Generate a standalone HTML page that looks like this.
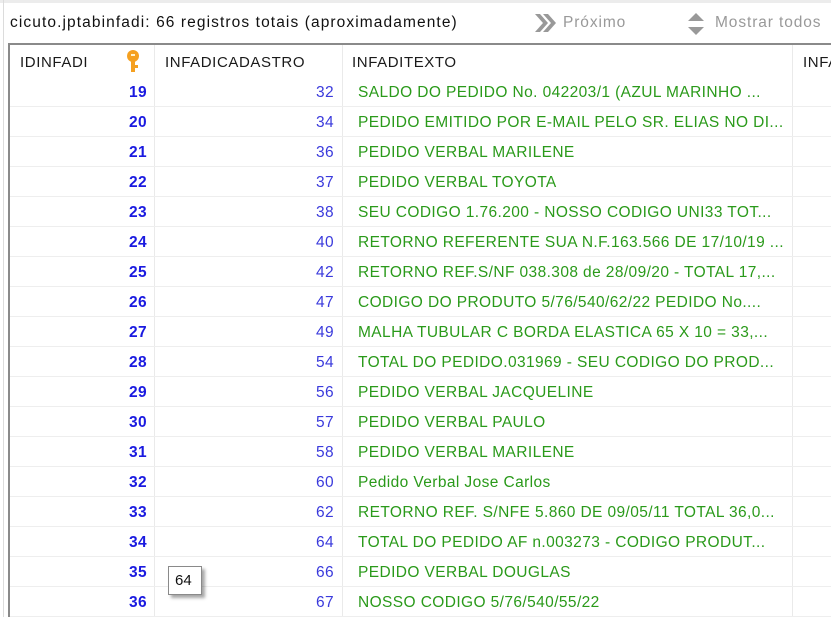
<html><head><style>
body{margin:0;width:831px;height:617px;overflow:hidden;background:#fff;font-family:"Liberation Sans",sans-serif;position:relative;letter-spacing:0.9px}
.abs{position:absolute;white-space:nowrap}
.hdr{font-size:15px;color:#1a1a1a;top:54px;letter-spacing:0.6px}
.row{position:absolute;left:10px;width:821px;height:30px;border-bottom:1px solid #eeeeee;font-size:15.5px;letter-spacing:0.4px}
.row span{position:absolute;top:8px}
.a{right:684px;color:#1a1ae0;font-weight:bold}
.b{right:497px;color:#3a3adc}
.c{left:348px;color:#2a9a1a}
</style></head><body>
<div class="abs" style="left:0;top:0;width:831px;height:3px;background:#ececec"></div>
<div class="abs" style="left:3px;top:0;width:1px;height:617px;background:#dcdcdc"></div>
<div class="abs" style="left:10px;top:14px;font-size:15.5px;color:#111;letter-spacing:1.1px">cicuto.jptabinfadi: 66 registros totais (aproximadamente)</div>
<svg class="abs" style="left:533px;top:12px" width="24" height="22"><path d="M2 2L10 11L2 20H7L15 11L7 2Z M10 2L18 11L10 20H15L23 11L15 2Z" fill="#999"/></svg>
<div class="abs" style="left:563px;top:14px;font-size:15.5px;color:#999">Próximo</div>
<svg class="abs" style="left:687px;top:12px" width="18" height="24"><path d="M9 1L17 9H1Z M9 23L17 15H1Z" fill="#999"/></svg>
<div class="abs" style="left:715px;top:14px;font-size:15.5px;color:#999">Mostrar todos</div>
<div class="abs" style="left:8px;top:43px;width:823px;height:2px;background:#8a8a8a"></div>
<div class="abs" style="left:8px;top:43px;width:2px;height:574px;background:#8a8a8a"></div>
<div class="abs" style="left:154px;top:45px;width:1px;height:572px;background:#eaeaea"></div>
<div class="abs" style="left:342px;top:45px;width:1px;height:572px;background:#eaeaea"></div>
<div class="abs" style="left:792px;top:45px;width:1px;height:572px;background:#eaeaea"></div>
<div class="abs hdr" style="left:20px">IDINFADI</div>
<svg class="abs" style="left:124px;top:50px" width="20" height="24"><circle cx="9" cy="6" r="6" fill="#f5a020"/><rect x="7" y="9" width="4" height="13" fill="#f5a020"/><rect x="10" y="15" width="4" height="3" fill="#f5a020"/><rect x="7" y="4" width="4" height="2" fill="#fff3d0"/></svg>
<div class="abs hdr" style="left:165px">INFADICADASTRO</div>
<div class="abs hdr" style="left:352px">INFADITEXTO</div>
<div class="abs hdr" style="left:803px">INFA</div>

<div class="row" style="top:76px"><span class="a">19</span><span class="b">32</span><span class="c">SALDO DO PEDIDO No. 042203/1 (AZUL MARINHO ...</span></div>
<div class="row" style="top:106px"><span class="a">20</span><span class="b">34</span><span class="c">PEDIDO EMITIDO POR E-MAIL PELO SR. ELIAS NO DI...</span></div>
<div class="row" style="top:136px"><span class="a">21</span><span class="b">36</span><span class="c">PEDIDO VERBAL MARILENE</span></div>
<div class="row" style="top:166px"><span class="a">22</span><span class="b">37</span><span class="c">PEDIDO VERBAL TOYOTA</span></div>
<div class="row" style="top:196px"><span class="a">23</span><span class="b">38</span><span class="c">SEU CODIGO 1.76.200 - NOSSO CODIGO UNI33 TOT...</span></div>
<div class="row" style="top:226px"><span class="a">24</span><span class="b">40</span><span class="c">RETORNO REFERENTE SUA N.F.163.566 DE 17/10/19 ...</span></div>
<div class="row" style="top:256px"><span class="a">25</span><span class="b">42</span><span class="c">RETORNO REF.S/NF 038.308 de 28/09/20 - TOTAL 17,...</span></div>
<div class="row" style="top:286px"><span class="a">26</span><span class="b">47</span><span class="c">CODIGO DO PRODUTO 5/76/540/62/22 PEDIDO No....</span></div>
<div class="row" style="top:316px"><span class="a">27</span><span class="b">49</span><span class="c">MALHA TUBULAR C BORDA ELASTICA 65 X 10 = 33,...</span></div>
<div class="row" style="top:346px"><span class="a">28</span><span class="b">54</span><span class="c">TOTAL DO PEDIDO.031969 - SEU CODIGO DO PROD...</span></div>
<div class="row" style="top:376px"><span class="a">29</span><span class="b">56</span><span class="c">PEDIDO VERBAL JACQUELINE</span></div>
<div class="row" style="top:406px"><span class="a">30</span><span class="b">57</span><span class="c">PEDIDO VERBAL PAULO</span></div>
<div class="row" style="top:436px"><span class="a">31</span><span class="b">58</span><span class="c">PEDIDO VERBAL MARILENE</span></div>
<div class="row" style="top:466px"><span class="a">32</span><span class="b">60</span><span class="c">Pedido Verbal Jose Carlos</span></div>
<div class="row" style="top:496px"><span class="a">33</span><span class="b">62</span><span class="c">RETORNO REF. S/NFE 5.860 DE 09/05/11 TOTAL 36,0...</span></div>
<div class="row" style="top:526px"><span class="a">34</span><span class="b">64</span><span class="c">TOTAL DO PEDIDO AF n.003273 - CODIGO PRODUT...</span></div>
<div class="row" style="top:556px"><span class="a">35</span><span class="b">66</span><span class="c">PEDIDO VERBAL DOUGLAS</span></div>
<div class="row" style="top:586px"><span class="a">36</span><span class="b">67</span><span class="c">NOSSO CODIGO 5/76/540/55/22</span></div>
<div class="abs" style="left:168px;top:566px;width:34px;height:29px;background:#fff;border:1px solid #8a8a8a;box-shadow:3px 3px 3px rgba(0,0,0,.35);font-size:15px;color:#111;line-height:27px;padding-left:6px;box-sizing:border-box;letter-spacing:0">64</div>
</body></html>
